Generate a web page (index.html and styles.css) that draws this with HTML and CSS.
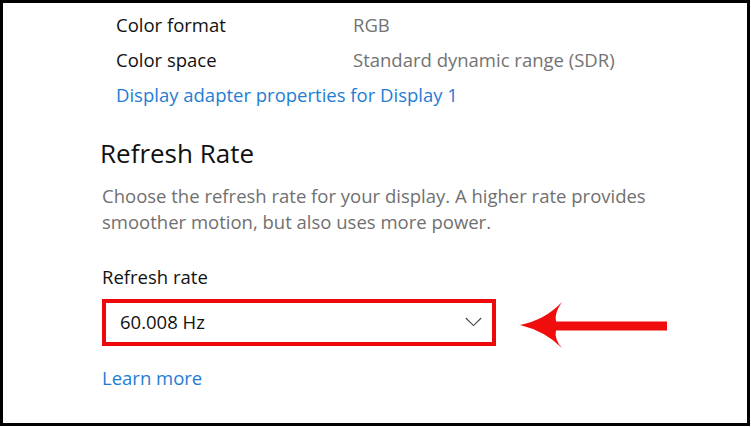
FILE: index.html
```html
<!DOCTYPE html>
<html lang="en">
<head>
<meta charset="utf-8">
<title>Refresh Rate</title>
<link rel="stylesheet" href="styles.css">
</head>
<body>
<div class="frame">
  <div class="content">
    <div class="props">
      <div class="row"><span class="key">Color format</span><span class="val">RGB</span></div>
      <div class="row"><span class="key">Color space</span><span class="val">Standard dynamic range (SDR)</span></div>
      <a class="link row-link" href="#">Display adapter properties for Display 1</a>
    </div>
    <h2 class="heading">Refresh Rate</h2>
    <p class="desc">Choose the refresh rate for your display. A higher rate provides smoother motion, but also uses more power.</p>
    <div class="label">Refresh rate</div>
    <div class="select-row">
      <div class="select">
        <span class="select-value">60.008 Hz</span>
        <svg class="chevron" width="17" height="10" viewBox="0 0 17 10"><path d="M0.8 1 L8.5 8.6 L16.2 1" fill="none" stroke="#444" stroke-width="1.1"/></svg>
      </div>
      <svg class="arrow" width="150" height="50" viewBox="0 0 150 50">
        <path d="M1 23 Q26 18 43 0 Q35 11 37 19.5 L148 19.5 L148 28.5 L37 28.5 Q35 37 43 46 Q26 29 1 23 Z" fill="#f00d0d"/>
      </svg>
    </div>
    <a class="link learn" href="#">Learn more</a>
  </div>
</div>
</body>
</html>
```

FILE: styles.css
```css
html, body {
  margin: 0;
  padding: 0;
  background: #fff;
}
body {
  font-family: "Open Sans", "Noto Sans", sans-serif;
  color: #111;
}
.frame {
  box-sizing: border-box;
  width: 750px;
  height: 426px;
  border: 3px solid #000;
  overflow: hidden;
}
.content {
  padding: 4px 0 0 99px;
}
.props {
  margin-left: 14px;
  display: flex;
  flex-direction: column;
}
.row {
  display: flex;
  font-size: 18.5px;
  line-height: 35px;
  height: 35px;
}
.key {
  width: 237px;
  color: #111;
}
.val {
  color: #737373;
}
.link {
  color: #1f7dd3;
  text-decoration: none;
  font-size: 18.5px;
}
.row-link {
  line-height: 35px;
}
.heading {
  margin: 23px 0 0 -2px;
  font-size: 26px;
  font-weight: 400;
  line-height: 36px;
  color: #111;
}
.desc {
  margin: 12px 0 0 0;
  width: 570px;
  font-size: 18.5px;
  line-height: 26px;
  color: #707070;
}
.label {
  margin-top: 29px;
  font-size: 18.5px;
  line-height: 26px;
  color: #111;
}
.select-row {
  margin-top: 9px;
  display: flex;
  align-items: flex-start;
}
.select {
  box-sizing: border-box;
  width: 394px;
  height: 47px;
  border: 4px solid #ee0a0a;
  padding: 6px 10px 7px 14px;
  display: flex;
  align-items: center;
  justify-content: space-between;
}
.select-value {
  font-size: 18.5px;
  line-height: 26px;
  color: #111;
}
.chevron {
  display: block;
  margin-top: 0;
}
.arrow {
  display: block;
  margin-left: 23px;
  margin-top: 3px;
}
.learn {
  display: block;
  margin-top: 13px;
  line-height: 26px;
}
```
